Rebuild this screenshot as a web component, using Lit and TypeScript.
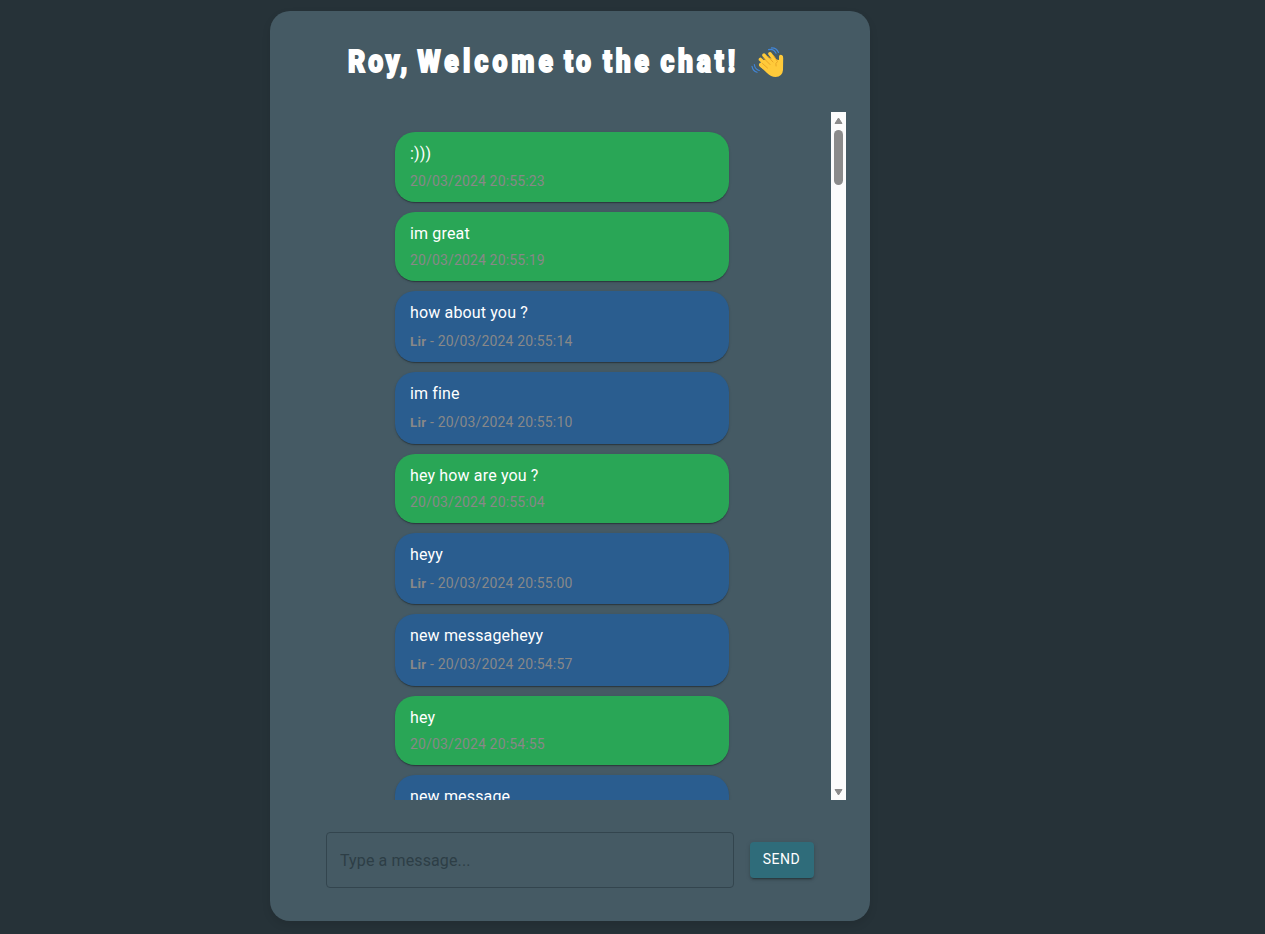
import { LitElement, html, css, svg } from "lit";
import { customElement, property } from "lit/decorators.js";

interface Message {
  text: string;
  time?: string;
  from?: string;
}

const MESSAGES: Message[] = [
  { text: ":)))", time: "20/03/2024 20:55:23" },
  { text: "im great", time: "20/03/2024 20:55:19" },
  { text: "how about you ?", time: "20/03/2024 20:55:14", from: "Lir" },
  { text: "im fine", time: "20/03/2024 20:55:10", from: "Lir" },
  { text: "hey how are you ?", time: "20/03/2024 20:55:04" },
  { text: "heyy", time: "20/03/2024 20:55:00", from: "Lir" },
  { text: "new messageheyy", time: "20/03/2024 20:54:57", from: "Lir" },
  { text: "hey", time: "20/03/2024 20:54:55" },
  { text: "new message", from: "Lir" },
];

// word, left edge, advance width
const TITLE: [string, number, number][] = [
  ["Roy,", 0, 59.5],
  ["Welcome", 69.5, 135.5],
  ["to", 216, 27],
  ["the", 255, 46],
  ["chat!", 312.5, 74.5],
];
const SQUEEZE = 0.83;

@customElement("chat-bubble")
export class ChatBubble extends LitElement {
  @property({ attribute: false }) message!: Message;

  static styles = css`
    :host { display: block; }
    .bubble {
      box-sizing: border-box;
      width: 334px;
      height: 69.5px;
      padding: 10px 15px;
      border-radius: 20px;
      background: #29a656;
      box-shadow: 0 2px 1px -1px rgba(0,0,0,.2), 0 1px 1px rgba(0,0,0,.14), 0 1px 3px rgba(0,0,0,.12);
      color: #fff;
    }
    .other { height: 71.3px; background: #2a5d8f; }
    .text { font-size: 16px; line-height: 24px; letter-spacing: 0.15px; }
    .meta { font-size: 14px; line-height: 20px; letter-spacing: 0.15px; color: #888; margin-top: 4.6px; }
    .other .meta { margin-top: 5.8px; }
    .name { font-size: 13.2px; font-weight: 700; letter-spacing: 0.3px; }
  `;

  render() {
    const m = this.message;
    return html`<div class="bubble ${m.from ? "other" : ""}">
      <div class="text">${m.text}</div>
      ${m.time
        ? html`<div class="meta">${m.from ? html`<span class="name">${m.from}</span> - ` : ""}${m.time}</div>`
        : ""}
    </div>`;
  }
}

@customElement("app-root")
export class AppRoot extends LitElement {
  static styles = css`
    :host {
      display: block;
      box-sizing: border-box;
      height: 934px;
      padding: 11px 0 0 270px;
      overflow: hidden;
      background: #263238;
      font-family: Roboto, "Liberation Sans", sans-serif;
    }
    .card {
      box-sizing: border-box;
      width: 600px;
      height: 910px;
      padding: 24px;
      border-radius: 20px;
      background: #455a64;
      box-shadow: 0 4px 8px rgba(0,0,0,.1);
      display: flex;
      flex-direction: column;
    }
    .title {
      margin: 0 0 0 54px;
      height: 77px;
      display: flex;
      align-items: flex-start;
    }
    .words { display: block; width: 395px; height: 52px; overflow: visible; }
    .words text {
      font-family: Roboto, sans-serif;
      font-weight: 900;
      font-size: 32px;
      fill: #fff;
      stroke: #fff;
      stroke-width: 1.8px;
    }
    .wave { display: block; width: 34px; height: 32px; margin: 12px 0 0 8px; }
    .scroller { height: 688px; display: flex; overflow: hidden; }
    .list {
      flex: 1;
      display: flex;
      flex-direction: column;
      align-items: center;
      gap: 10px;
      padding-top: 20px;
      padding-right: 1px;
      overflow: hidden;
    }
    chat-bubble { flex: none; }
    .bar {
      width: 15px;
      background: #fcfcfc;
      display: flex;
      flex-direction: column;
      align-items: center;
    }
    .bar svg { display: block; fill: #8b8b8b; stroke: #8b8b8b; stroke-linejoin: round; }
    .thumb { width: 9px; height: 55px; border-radius: 5px; background: #8b8b8b; margin-bottom: auto; }
    .form {
      display: flex;
      align-items: center;
      gap: 16px;
      padding: 32px 0 0 32px;
    }
    .field {
      box-sizing: border-box;
      width: 408px;
      height: 56px;
      padding: 0 13px;
      border: 1px solid #33454e;
      border-radius: 4px;
      background: transparent;
      font: 400 16px Roboto, sans-serif;
      letter-spacing: 0.12px;
      outline: none;
    }
    .field::placeholder { color: #2d3e46; opacity: 1; }
    .send {
      width: 64px;
      height: 36px;
      padding: 0 1px 2px 0;
      border: 0;
      border-radius: 4px;
      background: #2f6c7a;
      color: #fff;
      font: 450 14px Roboto, sans-serif;
      letter-spacing: 0.5px;
      box-shadow: 0 3px 1px -2px rgba(0,0,0,.2), 0 2px 2px rgba(0,0,0,.14), 0 1px 5px rgba(0,0,0,.12);
    }
  `;

  render() {
    return html`
      <main class="card">
        <h1 class="title">
          <svg class="words" viewBox="0 0 395 52">
            <g transform="scale(${SQUEEZE} 1)">
              ${TITLE.map(([w, x, len]) => svg`<text x=${x / SQUEEZE} y="37.3" textLength=${len / SQUEEZE}>${w}</text>`)}
            </g>
          </svg>
          <svg class="wave" viewBox="0 0 34 32" fill="none" stroke-linecap="round" stroke-linejoin="round">
            <path d="M10 18 23 27" stroke="#ffca3a" stroke-width="4"/>
            <path d="M11 14 18 11 28 13 29.800 9Q32 7.500 32.200 11L32 23Q31.500 29.500 24.500 30Q20 30 16 26L9 19.500Z" fill="#ffca3a"/>
            <g stroke="#ffca3a" stroke-width="3.600">
              <path d="M10 17.500 17 23M9.500 12.500 18 20M13 8.200 21 17M19 6.800 25 15M29.800 9.500V20"/>
            </g>
            <path d="M11.500 16.500 16.500 21M12.500 11 19 17.500M17 9.500 22 15M22.500 8.500 26.500 14.500Q24 16 25 19" stroke="#e5a024" stroke-width="0.900"/>
            <path d="M17.500 2.700Q22.500 1.500 25 6.200M20.500 .900Q25.500 .700 27.500 5.500M3.300 17.500Q4 22.500 8.300 23.500M1 19.300Q2 24 6 25.300" stroke="#4285d6" stroke-width="1.200"/>
          </svg>
        </h1>
        <section class="scroller">
          <div class="list">
            ${MESSAGES.map((m) => html`<chat-bubble .message=${m}></chat-bubble>`)}
          </div>
          <div class="bar">
            <svg width="15" height="18"><path d="M7.500 6 11 11.500H4Z"/></svg>
            <div class="thumb"></div>
            <svg width="15" height="15"><path d="M7.500 10 4 4.500H11Z"/></svg>
          </div>
        </section>
        <div class="form">
          <input class="field" placeholder="Type a message..." />
          <button class="send">SEND</button>
        </div>
      </main>
    `;
  }
}
